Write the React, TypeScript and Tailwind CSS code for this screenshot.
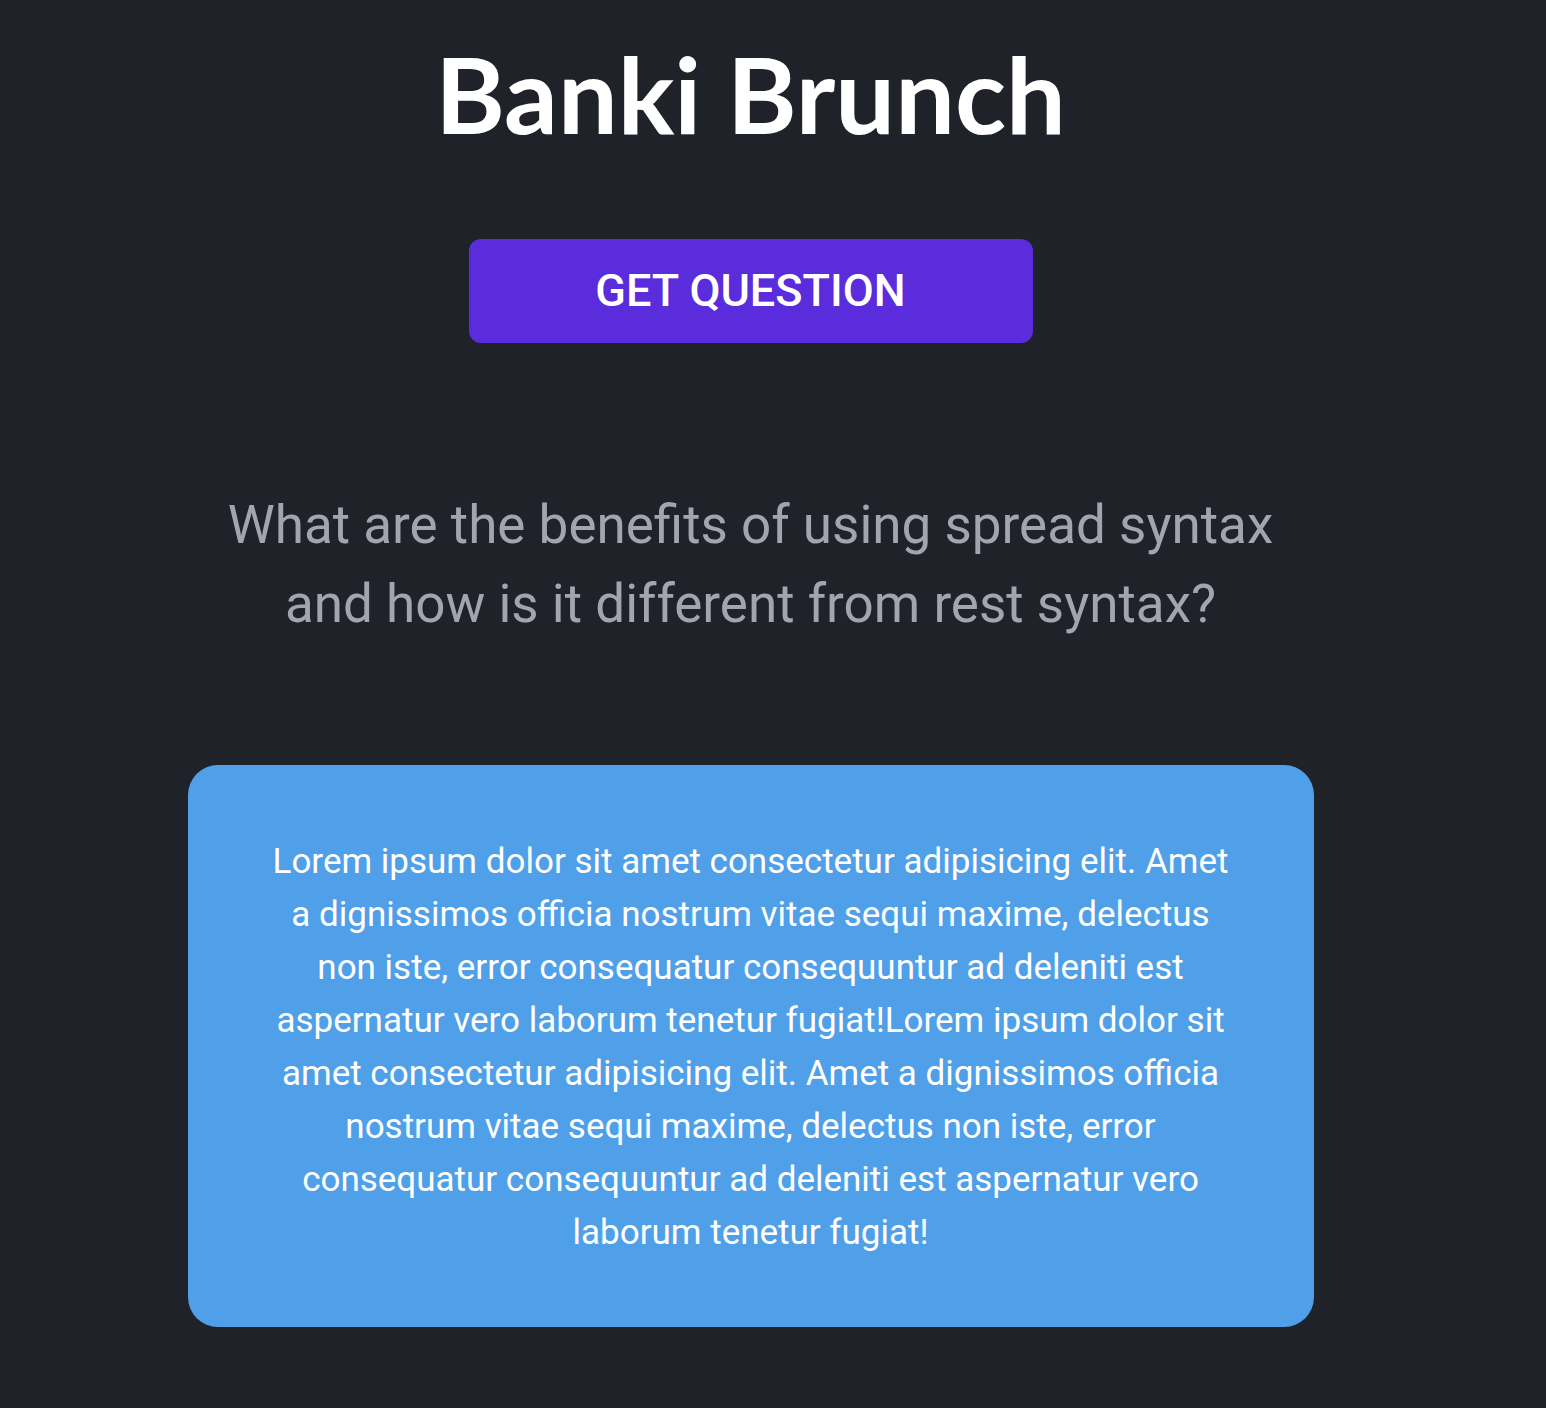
export default function App() {
  return (
    <div className="min-h-[1408px] w-full bg-[#1f2229] font-['Roboto','Liberation_Sans',sans-serif]">
      <div className="w-[1501px] flex flex-col items-center">
        <h1 className="mt-[30px] text-[106px] leading-[1.2] font-bold text-white font-['Lato','Noto_Sans',sans-serif]">
          Banki Brunch
        </h1>
        <button className="mt-[82px] w-[564px] h-[104px] rounded-[12px] bg-[#5a2cdc] text-white text-[45px] font-medium">
          GET QUESTION
        </button>
        <p className="mt-[143px] w-[1100px] text-center text-[#a2a5af] text-[53px] leading-[79px]">
          What are the benefits of using spread syntax and how is it different from rest syntax?
        </p>
        <div className="mt-[121px] w-[1126px] rounded-[30px] bg-[#509fe9] px-[80px] pt-[70px] pb-[68px]">
          <p className="text-center text-white text-[35px] leading-[53px]">
            Lorem ipsum dolor sit amet consectetur adipisicing elit. Amet a dignissimos officia nostrum vitae sequi maxime, delectus non iste, error consequatur consequuntur ad deleniti est aspernatur vero laborum tenetur fugiat!Lorem ipsum dolor sit amet consectetur adipisicing elit. Amet a dignissimos officia nostrum vitae sequi maxime, delectus non iste, error consequatur consequuntur ad deleniti est aspernatur vero laborum tenetur fugiat!
          </p>
        </div>
      </div>
    </div>
  );
}
